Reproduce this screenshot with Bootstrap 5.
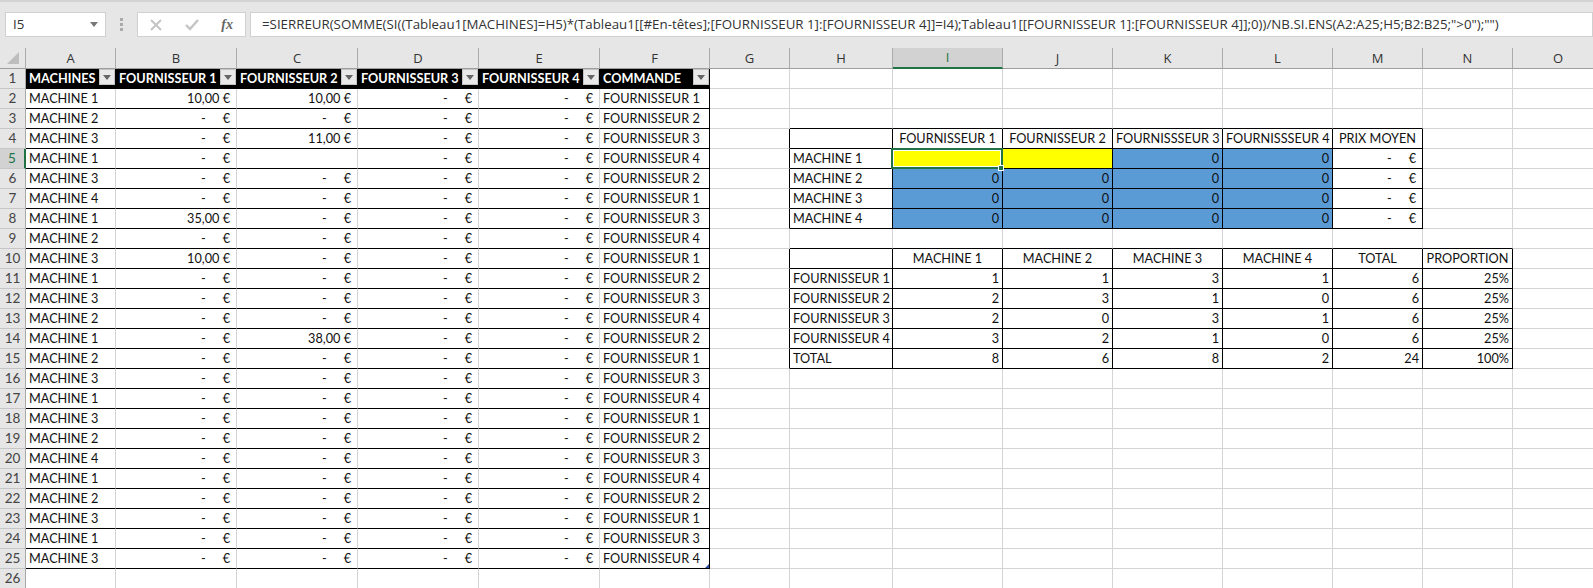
<!DOCTYPE html>
<html lang="fr"><head><meta charset="utf-8"><title>Classeur</title>
<link href="https://cdn.jsdelivr.net/npm/bootstrap@5.3.0/dist/css/bootstrap.min.css" rel="stylesheet">
<style>
html,body{height:588px;overflow:hidden;background:#fff}
.xbar{height:48px;background:#e6e6e6;border-top:2px solid #d4d4d4;padding:10px 0 11px 5px;font:13.3px/23px "Open Sans",sans-serif;color:#333}
.xbox{background:#fff;border:1px solid #d0d0d0;height:25px}
.xname{width:101px;padding:0 7px}
.xcaret{width:0;height:0;border:4px solid transparent;border-top:5px solid #777;border-bottom:0}
.xdots{width:31px;gap:2px}
.xdots i{width:3px;height:3px;background:#aaa}
.xbtns{width:109px;margin-right:4px;padding:0 12px 0 12px}
.xfx{font:italic 700 14px "Liberation Serif",serif;color:#666}
.xform{flex:1;padding-left:11px;white-space:nowrap;overflow:hidden}
.xsheet{overflow:hidden}
.xgrid{table-layout:fixed;width:1604px;border-collapse:separate;border-spacing:0;font:12.7px/19px Lato,sans-serif;color:#111}
.xgrid td,.xgrid th{height:20px;padding:0 3px;border-right:1px solid #d4d4d4;border-bottom:1px solid #d4d4d4;white-space:nowrap;font-weight:400;overflow:visible}
.xgrid thead th{background:#e6e6e6;text-align:center;border-right-color:#ababab;border-bottom-color:#9e9e9e;color:#333;font:13px/19px "Open Sans",sans-serif}
.xgrid tbody th{background:#e6e6e6;text-align:center;border-right-color:#a8a8a8;border-bottom-color:#c6c6c6;color:#444;padding:0;font-size:13.5px}
.xgrid thead th.xsel{background:#d2d2d2;border-bottom:2px solid #217346;color:#217346}
.xgrid tbody th.xsel{background:#d2d2d2;border-right:2px solid #217346;color:#217346}
.xcorner{width:0;height:0;border-style:solid;border-width:0 0 12px 12px;border-color:transparent transparent #bdbdbd transparent;margin:0 3px 0 auto}
.t1 td:nth-child(-n+7){border-bottom-color:#000}
.t1 td:nth-child(7){border-right-color:#000}
.xgrid td.hd{background:#000;color:#fff;font-weight:700;border-color:#000;padding-right:0}
.flt{width:16px;height:16px;background:#e9e9e9;border:1px solid #c4c4c4;position:relative;flex:none;align-self:flex-start}
.flt::after{content:"";position:absolute;left:3px;top:5px;border:4px solid transparent;border-top:5px solid #666;border-bottom:0}
.xgrid td.n{text-align:right;padding-right:6px}
.da{margin-right:17px}
.xgrid td.b{border-color:#000}
.xgrid td.br{border-right-color:#000}
.xgrid td.bb{border-bottom-color:#000}
.xgrid td.r{text-align:right}
.xgrid td.c{text-align:center}
.xgrid td.ye{background:#ff0}
.xgrid td.bl{background:#5b9bd5}
.xgrid td.pos{position:relative}
.selbox{position:absolute;left:-2px;top:-1px;width:112px;height:21px;border:2px solid #217346;box-shadow:inset 0 0 0 1px #fff}
.selh{position:absolute;right:-2px;bottom:-3px;width:6px;height:6px;background:#217346;border:1px solid #fff;z-index:2}
.tcorner{position:absolute;right:0;bottom:0;border-style:solid;border-width:0 0 4px 4px;border-color:transparent transparent #2f4f9f transparent}
</style></head><body>
<div class="xbar d-flex">
 <div class="xbox xname d-flex align-items-center justify-content-between"><span>I5</span><span class="xcaret"></span></div>
 <div class="xdots d-flex flex-column align-items-center justify-content-center"><i></i><i></i><i></i></div>
 <div class="xbox xbtns d-flex align-items-center justify-content-between">
  <svg width="12" height="12" viewBox="0 0 12 12"><path d="M1 1l10 10M11 1L1 11" stroke="#c4c4c4" stroke-width="2" fill="none"/></svg>
  <svg width="14" height="12" viewBox="0 0 14 12"><path d="M1 6l4 4 8-9" stroke="#c4c4c4" stroke-width="2.4" fill="none"/></svg>
  <span class="xfx">fx</span>
 </div>
 <div class="xbox xform">=SIERREUR(SOMME(SI((Tableau1[MACHINES]=H5)*(Tableau1[[#En-têtes];[FOURNISSEUR 1]:[FOURNISSEUR 4]]=I4);Tableau1[[FOURNISSEUR 1]:[FOURNISSEUR 4]];0))/NB.SI.ENS(A2:A25;H5;B2:B25;"&gt;0");"")</div>
</div>
<div class="xsheet">
<table class="xgrid">
<colgroup><col style="width:26px"><col style="width:90px"><col style="width:121px"><col style="width:121px"><col style="width:121px"><col style="width:121px"><col style="width:110px"><col style="width:80px"><col style="width:103px"><col style="width:110px"><col style="width:110px"><col style="width:110px"><col style="width:110px"><col style="width:90px"><col style="width:90px"><col style="width:91px"></colgroup>
<thead><tr><th><div class="xcorner"></div></th><th>A</th><th>B</th><th>C</th><th>D</th><th>E</th><th>F</th><th>G</th><th>H</th><th class="xsel">I</th><th>J</th><th>K</th><th>L</th><th>M</th><th>N</th><th>O</th></tr></thead>
<tbody>
<tr class="t1"><th>1</th><td class="hd"><div class="d-flex justify-content-between align-items-center"><span>MACHINES</span><span class="flt"></span></div></td><td class="hd"><div class="d-flex justify-content-between align-items-center"><span>FOURNISSEUR 1</span><span class="flt"></span></div></td><td class="hd"><div class="d-flex justify-content-between align-items-center"><span>FOURNISSEUR 2</span><span class="flt"></span></div></td><td class="hd"><div class="d-flex justify-content-between align-items-center"><span>FOURNISSEUR 3</span><span class="flt"></span></div></td><td class="hd"><div class="d-flex justify-content-between align-items-center"><span>FOURNISSEUR 4</span><span class="flt"></span></div></td><td class="hd"><div class="d-flex justify-content-between align-items-center"><span>COMMANDE</span><span class="flt"></span></div></td><td></td><td></td><td></td><td></td><td></td><td></td><td></td><td></td><td></td></tr>
<tr class="t1"><th>2</th><td>MACHINE 1</td><td class="n">10,00 €</td><td class="n">10,00 €</td><td class="n"><span class="da">-</span>€</td><td class="n"><span class="da">-</span>€</td><td>FOURNISSEUR 1</td><td></td><td></td><td></td><td></td><td></td><td></td><td></td><td></td><td></td></tr>
<tr class="t1"><th>3</th><td>MACHINE 2</td><td class="n"><span class="da">-</span>€</td><td class="n"><span class="da">-</span>€</td><td class="n"><span class="da">-</span>€</td><td class="n"><span class="da">-</span>€</td><td>FOURNISSEUR 2</td><td></td><td class="bb"></td><td class="bb"></td><td class="bb"></td><td class="bb"></td><td class="bb"></td><td class="bb"></td><td></td><td></td></tr>
<tr class="t1"><th>4</th><td>MACHINE 3</td><td class="n"><span class="da">-</span>€</td><td class="n">11,00 €</td><td class="n"><span class="da">-</span>€</td><td class="n"><span class="da">-</span>€</td><td>FOURNISSEUR 3</td><td class="br"></td><td class="b"></td><td class="b c">FOURNISSEUR 1</td><td class="b c">FOURNISSEUR 2</td><td class="b c">FOURNISSSEUR 3</td><td class="b c">FOURNISSSEUR 4</td><td class="b c">PRIX MOYEN</td><td></td><td></td></tr>
<tr class="t1"><th class="xsel">5</th><td>MACHINE 1</td><td class="n"><span class="da">-</span>€</td><td></td><td class="n"><span class="da">-</span>€</td><td class="n"><span class="da">-</span>€</td><td>FOURNISSEUR 4</td><td class="br"></td><td class="b">MACHINE 1</td><td class="b ye pos"><span class="selbox"></span><span class="selh"></span></td><td class="b ye"></td><td class="b bl r">0</td><td class="b bl r">0</td><td class="b n"><span class="da">-</span>€</td><td></td><td></td></tr>
<tr class="t1"><th>6</th><td>MACHINE 3</td><td class="n"><span class="da">-</span>€</td><td class="n"><span class="da">-</span>€</td><td class="n"><span class="da">-</span>€</td><td class="n"><span class="da">-</span>€</td><td>FOURNISSEUR 2</td><td class="br"></td><td class="b">MACHINE 2</td><td class="b bl r">0</td><td class="b bl r">0</td><td class="b bl r">0</td><td class="b bl r">0</td><td class="b n"><span class="da">-</span>€</td><td></td><td></td></tr>
<tr class="t1"><th>7</th><td>MACHINE 4</td><td class="n"><span class="da">-</span>€</td><td class="n"><span class="da">-</span>€</td><td class="n"><span class="da">-</span>€</td><td class="n"><span class="da">-</span>€</td><td>FOURNISSEUR 1</td><td class="br"></td><td class="b">MACHINE 3</td><td class="b bl r">0</td><td class="b bl r">0</td><td class="b bl r">0</td><td class="b bl r">0</td><td class="b n"><span class="da">-</span>€</td><td></td><td></td></tr>
<tr class="t1"><th>8</th><td>MACHINE 1</td><td class="n">35,00 €</td><td class="n"><span class="da">-</span>€</td><td class="n"><span class="da">-</span>€</td><td class="n"><span class="da">-</span>€</td><td>FOURNISSEUR 3</td><td class="br"></td><td class="b">MACHINE 4</td><td class="b bl r">0</td><td class="b bl r">0</td><td class="b bl r">0</td><td class="b bl r">0</td><td class="b n"><span class="da">-</span>€</td><td></td><td></td></tr>
<tr class="t1"><th>9</th><td>MACHINE 2</td><td class="n"><span class="da">-</span>€</td><td class="n"><span class="da">-</span>€</td><td class="n"><span class="da">-</span>€</td><td class="n"><span class="da">-</span>€</td><td>FOURNISSEUR 4</td><td></td><td class="bb"></td><td class="bb"></td><td class="bb"></td><td class="bb"></td><td class="bb"></td><td class="bb"></td><td class="bb"></td><td></td></tr>
<tr class="t1"><th>10</th><td>MACHINE 3</td><td class="n">10,00 €</td><td class="n"><span class="da">-</span>€</td><td class="n"><span class="da">-</span>€</td><td class="n"><span class="da">-</span>€</td><td>FOURNISSEUR 1</td><td class="br"></td><td class="b"></td><td class="b c">MACHINE 1</td><td class="b c">MACHINE 2</td><td class="b c">MACHINE 3</td><td class="b c">MACHINE 4</td><td class="b c">TOTAL</td><td class="b c">PROPORTION</td><td></td></tr>
<tr class="t1"><th>11</th><td>MACHINE 1</td><td class="n"><span class="da">-</span>€</td><td class="n"><span class="da">-</span>€</td><td class="n"><span class="da">-</span>€</td><td class="n"><span class="da">-</span>€</td><td>FOURNISSEUR 2</td><td class="br"></td><td class="b">FOURNISSEUR 1</td><td class="b r">1</td><td class="b r">1</td><td class="b r">3</td><td class="b r">1</td><td class="b r">6</td><td class="b r">25%</td><td></td></tr>
<tr class="t1"><th>12</th><td>MACHINE 3</td><td class="n"><span class="da">-</span>€</td><td class="n"><span class="da">-</span>€</td><td class="n"><span class="da">-</span>€</td><td class="n"><span class="da">-</span>€</td><td>FOURNISSEUR 3</td><td class="br"></td><td class="b">FOURNISSEUR 2</td><td class="b r">2</td><td class="b r">3</td><td class="b r">1</td><td class="b r">0</td><td class="b r">6</td><td class="b r">25%</td><td></td></tr>
<tr class="t1"><th>13</th><td>MACHINE 2</td><td class="n"><span class="da">-</span>€</td><td class="n"><span class="da">-</span>€</td><td class="n"><span class="da">-</span>€</td><td class="n"><span class="da">-</span>€</td><td>FOURNISSEUR 4</td><td class="br"></td><td class="b">FOURNISSEUR 3</td><td class="b r">2</td><td class="b r">0</td><td class="b r">3</td><td class="b r">1</td><td class="b r">6</td><td class="b r">25%</td><td></td></tr>
<tr class="t1"><th>14</th><td>MACHINE 1</td><td class="n"><span class="da">-</span>€</td><td class="n">38,00 €</td><td class="n"><span class="da">-</span>€</td><td class="n"><span class="da">-</span>€</td><td>FOURNISSEUR 2</td><td class="br"></td><td class="b">FOURNISSEUR 4</td><td class="b r">3</td><td class="b r">2</td><td class="b r">1</td><td class="b r">0</td><td class="b r">6</td><td class="b r">25%</td><td></td></tr>
<tr class="t1"><th>15</th><td>MACHINE 2</td><td class="n"><span class="da">-</span>€</td><td class="n"><span class="da">-</span>€</td><td class="n"><span class="da">-</span>€</td><td class="n"><span class="da">-</span>€</td><td>FOURNISSEUR 1</td><td class="br"></td><td class="b">TOTAL</td><td class="b r">8</td><td class="b r">6</td><td class="b r">8</td><td class="b r">2</td><td class="b r">24</td><td class="b r">100%</td><td></td></tr>
<tr class="t1"><th>16</th><td>MACHINE 3</td><td class="n"><span class="da">-</span>€</td><td class="n"><span class="da">-</span>€</td><td class="n"><span class="da">-</span>€</td><td class="n"><span class="da">-</span>€</td><td>FOURNISSEUR 3</td><td></td><td></td><td></td><td></td><td></td><td></td><td></td><td></td><td></td></tr>
<tr class="t1"><th>17</th><td>MACHINE 1</td><td class="n"><span class="da">-</span>€</td><td class="n"><span class="da">-</span>€</td><td class="n"><span class="da">-</span>€</td><td class="n"><span class="da">-</span>€</td><td>FOURNISSEUR 4</td><td></td><td></td><td></td><td></td><td></td><td></td><td></td><td></td><td></td></tr>
<tr class="t1"><th>18</th><td>MACHINE 3</td><td class="n"><span class="da">-</span>€</td><td class="n"><span class="da">-</span>€</td><td class="n"><span class="da">-</span>€</td><td class="n"><span class="da">-</span>€</td><td>FOURNISSEUR 1</td><td></td><td></td><td></td><td></td><td></td><td></td><td></td><td></td><td></td></tr>
<tr class="t1"><th>19</th><td>MACHINE 2</td><td class="n"><span class="da">-</span>€</td><td class="n"><span class="da">-</span>€</td><td class="n"><span class="da">-</span>€</td><td class="n"><span class="da">-</span>€</td><td>FOURNISSEUR 2</td><td></td><td></td><td></td><td></td><td></td><td></td><td></td><td></td><td></td></tr>
<tr class="t1"><th>20</th><td>MACHINE 4</td><td class="n"><span class="da">-</span>€</td><td class="n"><span class="da">-</span>€</td><td class="n"><span class="da">-</span>€</td><td class="n"><span class="da">-</span>€</td><td>FOURNISSEUR 3</td><td></td><td></td><td></td><td></td><td></td><td></td><td></td><td></td><td></td></tr>
<tr class="t1"><th>21</th><td>MACHINE 1</td><td class="n"><span class="da">-</span>€</td><td class="n"><span class="da">-</span>€</td><td class="n"><span class="da">-</span>€</td><td class="n"><span class="da">-</span>€</td><td>FOURNISSEUR 4</td><td></td><td></td><td></td><td></td><td></td><td></td><td></td><td></td><td></td></tr>
<tr class="t1"><th>22</th><td>MACHINE 2</td><td class="n"><span class="da">-</span>€</td><td class="n"><span class="da">-</span>€</td><td class="n"><span class="da">-</span>€</td><td class="n"><span class="da">-</span>€</td><td>FOURNISSEUR 2</td><td></td><td></td><td></td><td></td><td></td><td></td><td></td><td></td><td></td></tr>
<tr class="t1"><th>23</th><td>MACHINE 3</td><td class="n"><span class="da">-</span>€</td><td class="n"><span class="da">-</span>€</td><td class="n"><span class="da">-</span>€</td><td class="n"><span class="da">-</span>€</td><td>FOURNISSEUR 1</td><td></td><td></td><td></td><td></td><td></td><td></td><td></td><td></td><td></td></tr>
<tr class="t1"><th>24</th><td>MACHINE 1</td><td class="n"><span class="da">-</span>€</td><td class="n"><span class="da">-</span>€</td><td class="n"><span class="da">-</span>€</td><td class="n"><span class="da">-</span>€</td><td>FOURNISSEUR 3</td><td></td><td></td><td></td><td></td><td></td><td></td><td></td><td></td><td></td></tr>
<tr class="t1"><th>25</th><td>MACHINE 3</td><td class="n"><span class="da">-</span>€</td><td class="n"><span class="da">-</span>€</td><td class="n"><span class="da">-</span>€</td><td class="n"><span class="da">-</span>€</td><td class="pos">FOURNISSEUR 4<span class="tcorner"></span></td><td></td><td></td><td></td><td></td><td></td><td></td><td></td><td></td><td></td></tr>
<tr><th>26</th><td></td><td></td><td></td><td></td><td></td><td></td><td></td><td></td><td></td><td></td><td></td><td></td><td></td><td></td><td></td></tr>
</tbody></table>
</div>
<script src="https://cdn.jsdelivr.net/npm/bootstrap@5.3.0/dist/js/bootstrap.bundle.min.js"></script>
</body></html>
